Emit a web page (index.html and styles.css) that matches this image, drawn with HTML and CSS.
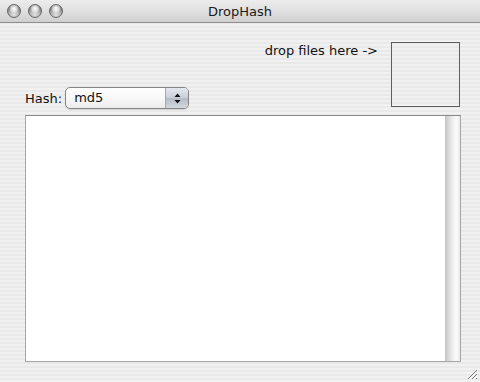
FILE: index.html
```html
<!DOCTYPE html>
<html lang="en">
  <head>
    <meta name="viewport" content="width=device-width, initial-scale=1.0" />
    <title>DropHash</title>
    <link rel="stylesheet" href="styles.css">
  </head>
  <body>
    <div class="window">
      <div class="titlebar">
        <div class="lights">
          <span class="light"></span>
          <span class="light"></span>
          <span class="light"></span>
        </div>
        <div class="title">DropHash</div>
      </div>

      <div class="content">
        <div class="top">
          <div class="hash-row">
            <label class="hash-label">Hash:</label>
            <div class="popup">
              <span class="popup-value">md5</span>
              <span class="popup-arrows">
                <svg width="7" height="11" viewBox="0 0 7 11">
                  <path d="M3.5 0.5 L6.5 4 L0.5 4 Z" fill="#111" />
                  <path d="M3.5 10.5 L6.5 7 L0.5 7 Z" fill="#111" />
                </svg>
              </span>
            </div>
          </div>
          <div class="drop-row">
            <span class="drop-label">drop files here -&gt;</span>
            <div class="drop-box"></div>
          </div>
        </div>

        <div class="output">
          <div class="output-text"></div>
          <div class="scroll-track"></div>
        </div>
      </div>

      <div class="grip">
        <svg width="12" height="12" viewBox="0 0 12 12">
          <path d="M11 2 L2 11 M11 6 L6 11 M11 10 L10 11" stroke="#7a7a7a" stroke-width="1" />
          <path d="M12 3 L3 12 M12 7 L7 12" stroke="#ffffff" stroke-width="1" />
        </svg>
      </div>
    </div>
  </body>
</html>
```

FILE: styles.css
```css
html, body {
  margin: 0;
  padding: 0;
}
body {
  font-family: "DejaVu Sans", "Liberation Sans", sans-serif;
  font-size: 13px;
  color: #111;
}

.window {
  position: relative;
  width: 480px;
  height: 382px;
  overflow: hidden;
  background: repeating-linear-gradient(
    to bottom,
    #f1f1f1 0px,
    #f1f1f1 2px,
    #e9e9e9 2px,
    #e9e9e9 4px
  );
}

/* title bar */
.titlebar {
  display: flex;
  align-items: center;
  height: 22px;
  border-bottom: 1px solid #8e8e8e;
  background: linear-gradient(to bottom, #ececec 0%, #e0e0e0 50%, #cfcfcf 100%);
  position: relative;
}
.lights {
  display: flex;
  gap: 7px;
  padding-left: 7px;
}
.light {
  width: 14px;
  height: 14px;
  border-radius: 50%;
  box-sizing: border-box;
  border: 1px solid #666;
  background:
    radial-gradient(circle at 50% 28%, #ffffff 0px, rgba(255,255,255,0.6) 3px, rgba(255,255,255,0) 5px),
    radial-gradient(circle at 50% 80%, #e4e4e4 0px, #b0b0b0 5px, #7e7e7e 8px);
}
.title {
  position: absolute;
  left: 0;
  right: 0;
  text-align: center;
  font-size: 13px;
  color: #1a1a1a;
  top: 4px;
}

/* content */
.content {
  padding: 19px 19px 0 25px;
  display: flex;
  flex-flow: column;
}
.top {
  display: flex;
  justify-content: space-between;
  align-items: flex-end;
}
.hash-row {
  display: flex;
  align-items: center;
  gap: 3px;
}
.popup {
  display: flex;
  width: 124px;
  height: 22px;
  box-sizing: border-box;
  border: 1px solid #858585;
  border-radius: 5px;
  background: linear-gradient(to bottom, #ffffff 0%, #f6f6f6 60%, #ececec 100%);
  overflow: hidden;
  box-shadow: 0 1px 1px rgba(0,0,0,0.12);
}
.popup-value {
  flex: 1;
  padding-left: 8px;
  line-height: 20px;
}
.popup-arrows {
  width: 22px;
  display: flex;
  align-items: center;
  justify-content: center;
  border-left: 1px solid #a8a8a8;
  background: linear-gradient(to bottom, #e4e8ee 0%, #c9cfd8 50%, #b5bcc7 52%, #d3d8df 100%);
}
.drop-row {
  display: flex;
  align-items: flex-start;
  gap: 13px;
  margin-right: 1px;
  margin-bottom: 2px;
}
.drop-label {
  margin-top: 1px;
}
.drop-box {
  width: 69px;
  height: 65px;
  box-sizing: border-box;
  border: 1px solid #5e5e5e;
}

.output {
  display: flex;
  margin-top: 6px;
  height: 247px;
  box-sizing: border-box;
  border: 1px solid #a6a6a6;
  border-top-color: #8a8a8a;
  background: #fff;
}
.output-text {
  flex: 1;
}
.scroll-track {
  width: 15px;
  background: linear-gradient(to right, #c4c4c4 0%, #dadada 25%, #f4f4f4 60%, #fafafa 80%, #e8e8e8 100%);
}

.grip {
  position: absolute;
  right: 2px;
  bottom: 2px;
  width: 12px;
  height: 12px;
}
.grip svg {
  display: block;
}
```
